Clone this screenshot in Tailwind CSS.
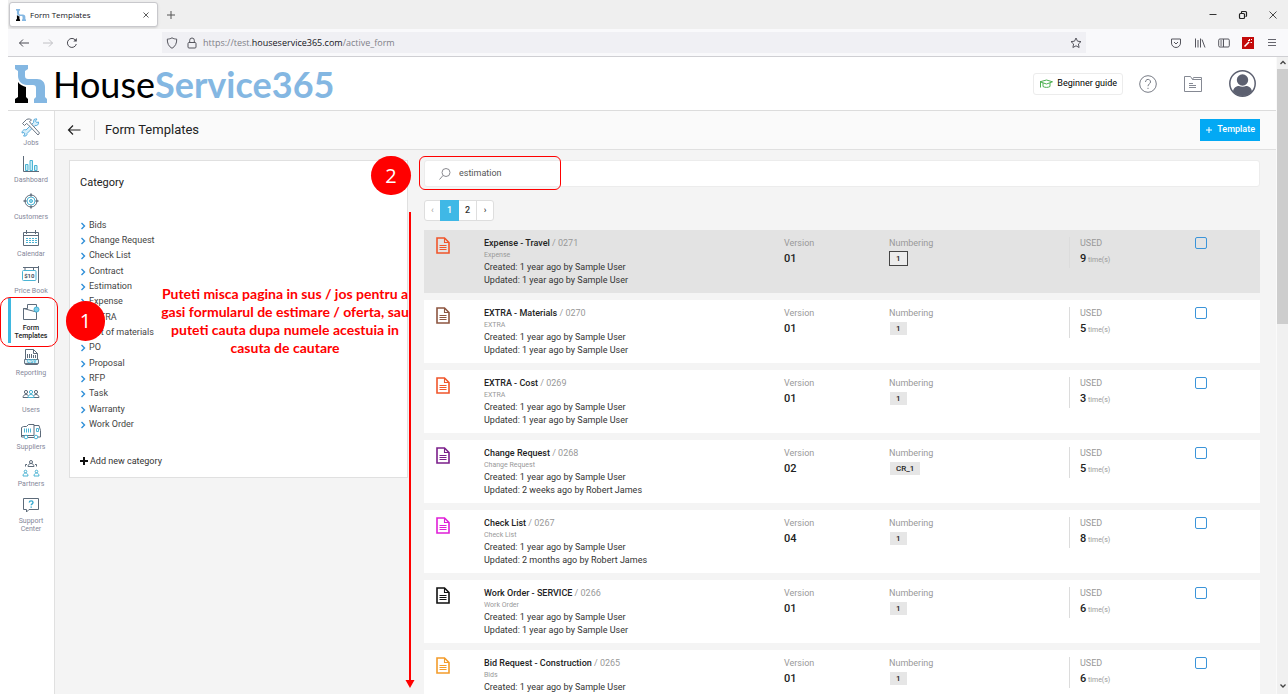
<!DOCTYPE html>
<html lang="en">
<head>
    <meta charset="UTF-8">
    <meta name="viewport" content="width=device-width, initial-scale=1.0">
    <title>Form Templates</title>
    <script src="https://cdn.jsdelivr.net/npm/@tailwindcss/browser@4"></script>
</head>

<body class="relative h-screen overflow-hidden bg-white pl-2 pb-0.5 flex flex-col font-['Roboto',sans-serif] text-[#333]">

    <!-- Tabs -->
    <div class="h-[29px] shrink-0 bg-[#efefef] flex items-center font-['Open_Sans',sans-serif]">
        <div class="ml-px w-[149px] h-[25px] bg-white border border-[#c8c8cc] rounded-[3px] shadow-sm flex items-center pl-1.5 pr-2">
            <svg class="w-2.5 h-3" viewBox="0 0 32 38"><path fill="#84b7e2" d="M0 0h13v4l-3 2v8c0 2 1 3 3 3h9c5 0 8 3 8 8v7l2 2v4H19v-4l2-2v-7c0-2-1-3-3-3h-6c-5 0-9-4-9-9V6L0 4z"/><path fill="#000" d="M3 19c2 3 5 4 8 4v9l2 2v4H0v-4l3-2z"/></svg>
            <span class="ml-1 flex-1 text-[8px] text-[#15141a]">Form Templates</span>
            <button aria-label="Close tab"><svg class="w-1.5 h-1.5" viewBox="0 0 6 6" stroke="#333" stroke-width=".8"><path d="M.5.5l5 5M5.5.5l-5 5"/></svg></button>
        </div>
        <button aria-label="New tab" class="ml-2"><svg class="w-2.5 h-2.5" viewBox="0 0 10 10" stroke="#555" stroke-width="1"><path d="M5 1v8M1 5h8"/></svg></button>
        <div class="ml-auto flex items-center gap-5 pr-2.5">
            <button aria-label="Minimize" class="w-2.5"><svg class="w-2.5 h-2.5" viewBox="0 0 10 10" stroke="#333"><path d="M1.500 4.500h7"/></svg></button>
            <button aria-label="Restore" class="w-2.5"><svg class="w-2.5 h-2.5" viewBox="0 0 10 10" fill="none" stroke="#222" stroke-width="1.200"><rect x="1.500" y="3.500" width="5" height="5" rx="1"/><path d="M3.500 3V2q0-.5.5-.5h3.500q1 0 1 1V6q0 .5-1 .5"/></svg></button>
            <button aria-label="Close" class="w-2.5"><svg class="w-2.5 h-2.5" viewBox="0 0 10 10" stroke="#333" stroke-width=".9"><path d="M1.500 1.500l7 7M8.500 1.500l-7 7"/></svg></button>
        </div>
    </div>

    <!-- Address bar -->
    <div class="h-7 shrink-0 bg-[#f9f9fb] border-b border-[#cfcfd3] flex items-center font-['Open_Sans',sans-serif]">
        <div class="w-[154px] flex items-center gap-3 pl-2.5">
            <button aria-label="Back"><svg class="w-3 h-3" viewBox="0 0 12 12" fill="none" stroke="#4a4a52"><path d="M11 6H1.500M5 2.500L1.500 6 5 9.500"/></svg></button>
            <button aria-label="Forward"><svg class="w-3 h-3" viewBox="0 0 12 12" fill="none" stroke="#c0c0c4"><path d="M1 6h9.500M7 2.500L10.500 6 7 9.500"/></svg></button>
            <button aria-label="Reload"><svg class="w-3 h-3" viewBox="0 0 12 12" fill="none" stroke="#4a4a52"><path d="M10.300 7A4.500 4.500 0 1 1 9.500 3.200"/><path d="M10.800 1v3.500H7.300z" fill="#4a4a52" stroke="none"/></svg></button>
        </div>
        <div class="flex-1 h-[21px] bg-[#f0f0f4] flex items-center pl-1">
            <svg class="w-3 h-3" viewBox="0 0 12 12" fill="none" stroke="#55555d"><path d="M6 .8c1.500 1 3 1.200 4.700 1.300C10.800 6 9.500 9.500 6 11.300 2.500 9.500 1.200 6 1.300 2.100 3 2 4.500 1.800 6 .8z"/></svg>
            <svg class="ml-2 w-3 h-3" viewBox="0 0 12 12" fill="none" stroke="#55555d"><rect x="2" y="5.500" width="8" height="5.500" rx="1"/><path d="M3.700 5.500V3.300a2.300 2.300 0 0 1 4.600 0v2.200"/></svg>
            <span class="ml-1 pl-px flex-1 text-[9px] text-[#808088]">https://test.<span class="text-[#15141a]">houseservice365.com</span>/active_form</span>
            <button aria-label="Bookmark" class="mr-1"><svg class="w-3 h-3" viewBox="0 0 12 12" fill="none" stroke="#55555d" stroke-linejoin="round"><path d="M6 1l1.500 3.200 3.500.4-2.600 2.400.7 3.500L6 8.800l-3.100 1.700.7-3.500L1 4.600l3.500-.4z"/></svg></button>
        </div>
        <div class="w-[202px] flex items-center justify-end gap-3 pr-2.5">
            <button aria-label="Pocket"><svg class="w-3 h-3" viewBox="0 0 12 12" fill="none" stroke="#55555d"><path d="M1.500 2h9v4a4.500 4.500 0 0 1-9 0z"/><path d="M4 5l2 2 2-2"/></svg></button>
            <button aria-label="Library"><svg class="w-3 h-3" viewBox="0 0 12 12" fill="none" stroke="#55555d"><path d="M1.500 1.500v9M4 3v7.500M6.500 1.500v9M8 2.500l3 8"/></svg></button>
            <button aria-label="Sidebars"><svg class="w-3 h-3" viewBox="0 0 12 12" fill="none" stroke="#55555d"><rect x=".7" y="2" width="10.600" height="8" rx="1.200"/><path d="M5.500 2v8M2.200 4h2M2.200 6h2M2.200 8h2"/></svg></button>
            <button aria-label="Extension" class="bg-[#c40b0b]"><svg class="w-3 h-3" viewBox="0 0 12 12" fill="none" stroke="#fff"><path d="M2.500 9.500L7 5" stroke-width="1.600"/><path d="M7.500 2v2M6 3.500h1.500M8.500 5.500h1.500M9 3l1-1"/></svg></button>
            <button aria-label="Menu"><svg class="w-3 h-3" viewBox="0 0 12 12" stroke="#66666e"><path d="M2 2.500h8M2 5.500h8M2 8.500h8"/></svg></button>
        </div>
    </div>

    <div class="flex flex-1 min-h-0">
        <div class="flex-1 min-w-0 flex flex-col">

            <!-- Header -->
            <header class="h-[54px] shrink-0 border-b border-[#dcdcdc] flex items-center pl-2 pr-5">
                <a href="#" class="flex items-center">
                    <svg class="w-8 h-[38px] -ml-px" viewBox="0 0 32 38"><path fill="#84b7e2" d="M0 0h13v4l-3 2v5c0 2 1 3 3 3h9c5 0 8 3 8 8v10l2 2v4H19v-4l2-2V23c0-2-1-3-3-3h-6c-5 0-9-4-9-9V6L0 4z"/><path fill="#000" d="M3 17c2 3 5 4 8 5v10l2 2v4H0v-4l3-2z"/></svg>
                    <span class="ml-1.5 text-[36px] leading-[48px] font-['Lato',sans-serif] text-black">House<span class="font-bold text-[#84b7e2]">Service365</span></span>
                </a>
                <div class="ml-auto flex items-center">
                    <a href="#guide" class="h-[22px] px-[5px] border border-[#ececec] rounded-[3px] flex items-center text-[9px] text-black whitespace-nowrap">
                        <svg class="w-3.5 h-3 mr-1" viewBox="0 0 14 12" fill="none" stroke="#4caf50" stroke-linejoin="round"><path d="M1 3.800L7.500 2l6 1.800-6 2.200zM4 5v3.500c2 1.200 5 1.200 7 0V5M1.500 4v5.500"/></svg>
                        Beginner guide
                    </a>
                    <a href="#help" aria-label="Help" class="ml-4"><svg class="w-[18px] h-[18px]" viewBox="0 0 18 18" fill="none" stroke="#777b85"><circle cx="9" cy="9" r="8.300"/><path d="M6.500 7c0-3.600 5.200-3.300 5 0 0 1.800-2.500 2-2.500 4.200M9 12.800V14"/></svg></a>
                    <a href="#files" aria-label="Files" class="ml-[27px]"><svg class="w-[18px] h-[18px]" viewBox="0 0 18 18" fill="none" stroke="#858993"><path d="M.5 16.500V1.500h6l2 3h9v12zM8.500 4.500l1-2h8v2M5 8.500h4M5 10.500h7M5 12.500h7"/></svg></a>
                    <a href="#profile" aria-label="Profile" class="ml-[27px]"><svg class="w-[27px] h-[27px]" viewBox="0 0 27 27"><circle cx="13.500" cy="13.500" r="12.700" fill="#fff" stroke="#5c6070" stroke-width="1.500"/><circle cx="13.500" cy="10" r="5.700" fill="#5c6070"/><path fill="#5c6070" d="M4 21.500c.5-4 3.500-5.500 6-5.500 2 1 5 1 7 0 2.500 0 5.500 1.500 6 5.500-5 6-14 6-19 0z"/></svg></a>
                </div>
            </header>

            <div class="flex flex-1 min-h-0">
                <!-- Sidebar -->
                <nav class="w-[47px] shrink-0 border-r border-[#e0e0e0] pt-1.5 flex flex-col gap-[7px] text-center text-[7px] leading-2 text-[#85879a]">
                    <a href="#jobs" class="block">
                        <svg class="w-5 h-5 mx-auto mb-0.5" viewBox="0 0 20 20" fill="none" stroke="#6b7684"><path stroke="#5aaede" fill="#d8effa" d="M13 2.500c2-1 3-.5 3-.5l-1.500 2 1 1.500 2-.5c.5 3-2 4-3.500 3.500l-8 8c.5 2-1.500 3-3.500 2.500l1.500-2-1-1.500-2 .5c0-2.500 2-4 4-3l7.500-7.500z"/><path fill="#fff" d="M1.500 6.500l4-4c2-1 4-.5 5 .5L8.500 4.500l1 1.500 9 10-1.500 2L7.500 8l-2-1.500L3.500 8.500z"/></svg>
                        Jobs
                    </a>
                    <a href="#dashboard" class="block">
                        <svg class="w-5 h-5 mx-auto mb-0.5" viewBox="0 0 20 20" fill="#c9ecf6" stroke="#4bb4d4"><path d="M4.500 10.500h2.500v6H4.500zM9 6.500h2.500v10H9zM13.500 11.500H16v5h-2.500z"/><path stroke="#5d6b7a" fill="none" d="M2.500 2v15.500H18"/></svg>
                        Dashboard
                    </a>
                    <a href="#customers" class="block">
                        <svg class="w-5 h-5 mx-auto mb-0.5" viewBox="0 0 20 20" fill="none" stroke="#5d6b7a"><circle cx="10" cy="10" r="6"/><circle cx="10" cy="10" r="4" stroke="#4bb4d4"/><circle cx="10" cy="10" r="1.500" fill="#9bdcee" stroke="#4bb4d4"/><path stroke-width="1.500" d="M10 2.500v3M10 14.500v3M2.500 10h3M14.500 10h3"/></svg>
                        Customers
                    </a>
                    <a href="#calendar" class="block">
                        <svg class="w-5 h-5 mx-auto mb-0.5" viewBox="0 0 20 20" fill="none" stroke="#5d6b7a"><path d="M2.500 4.500h15v13h-15zM2.500 7.500h15M5.500 2v4M14.500 2v4"/><path stroke="#4bb4d4" stroke-dasharray="2 1" d="M5 10.500h11M5 12.500h11M5 14.500h11"/></svg>
                        Calendar
                    </a>
                    <a href="#price-book" class="block">
                        <svg class="w-5 h-5 mx-auto mb-0.5" viewBox="0 0 20 20" fill="none" stroke="#5d6b7a"><path d="M2 2.500h16M17.500 1v17"/><rect x="1.500" y="5.500" width="13.500" height="10" rx="1" stroke="#4bb4d4"/><path d="M4 3v2M12.500 3v2"/><text x="8.300" y="12.800" text-anchor="middle" font-size="6" font-weight="700" fill="#4b5563" stroke="none">$10</text></svg>
                        Price Book
                    </a>
                    <a href="#form-templates" class="relative block text-[#222] font-medium">
                        <span class="absolute left-0 -top-1 w-[3px] h-[45px] bg-[#3fb8e0]"></span>
                        <svg class="w-5 h-5 mx-auto mb-0.5" viewBox="0 0 20 20" fill="none" stroke="#5d6b7a"><path d="M6.500 2.500h9v3M15.500 10v7.500h-13v-11zM6.500 2.500v4h-4"/><circle cx="15.500" cy="7.500" r="2.500" fill="#7fd0ea" stroke="#3fb0d6"/></svg>
                        Form<br>Templates
                    </a>
                    <a href="#reporting" class="block">
                        <svg class="w-5 h-5 mx-auto mb-0.5" viewBox="0 0 20 20" fill="none" stroke="#5d6b7a"><path d="M4.500 2.500h8l4 4v11h-12zM12.500 2.500v4h4M6.500 7v4M8.500 7v4M10.500 7v4M12.500 8v3M14.500 8v3"/><path d="M3.500 12.500h14v4h-14z" fill="#e2f5fb" stroke="#6b7684"/><text x="10.500" y="16.300" text-anchor="middle" font-size="5" font-weight="700" fill="#4bb4d4" stroke="none">CSV</text></svg>
                        Reporting
                    </a>
                    <a href="#users" class="block">
                        <svg class="w-5 h-5 mx-auto mb-0.5" viewBox="0 0 20 20" fill="none" stroke="#5d6b7a"><circle cx="5" cy="8" r="1.600"/><circle cx="15" cy="8" r="1.600"/><path d="M2 13.500c0-4 6-4 6 0zM12 13.500c0-4 6-4 6 0z"/><g stroke="#4bb4d4" fill="#fff"><path d="M7 13.500c0-4 6-4 6 0z"/><circle cx="10" cy="8" r="1.600"/></g></svg>
                        Users
                    </a>
                    <a href="#suppliers" class="block">
                        <svg class="w-[22px] h-5 mx-auto mb-0.5" viewBox="0 0 22 20" fill="none" stroke="#5d6b7a"><path d="M1.500 6.500l2-1h3l2-2h5.500v11H1.500zM14 4.500h5l1.500 5v6.500h-3M1.500 14v2h2.500M8 16.500h6"/><path stroke="#4bb4d4" d="M4.500 7.500v4M6.500 7.500v4M8.500 7.500v4M10.500 7.500v4M16.500 7.500h2v3h-2z"/><circle cx="6" cy="16" r="1.800" stroke="#4bb4d4"/><circle cx="16" cy="16" r="1.800" stroke="#4bb4d4"/></svg>
                        Suppliers
                    </a>
                    <a href="#partners" class="block">
                        <svg class="w-5 h-5 mx-auto mb-0.5" viewBox="0 0 20 20" fill="none" stroke="#5d6b7a"><circle cx="10" cy="4" r="1.500"/><path d="M7 8.500c0-4 6-4 6 0zM4.500 8.500V6.500H6M15.500 8.500V6.500H14"/><g stroke="#4bb4d4"><circle cx="4.500" cy="13.500" r="1.300"/><path d="M2 18c0-4 5-4 5 0z"/><circle cx="15.500" cy="13.500" r="1.300"/><path d="M13 18c0-4 5-4 5 0z"/></g></svg>
                        Partners
                    </a>
                    <a href="#support" class="block">
                        <svg class="w-5 h-5 mx-auto mb-0.5" viewBox="0 0 20 20" fill="none" stroke="#5d6b7a"><path d="M2.500 3.500h15v11H8l-2.500 2.500v-2.500h-3z"/><path stroke="#35a9cf" stroke-width="1.400" d="M8.300 7.500c0-2.200 3.700-2.200 3.700 0 0 1.500-1.800 1.200-1.800 2.800M10.200 11.500v1.200"/></svg>
                        Support<br>Center
                    </a>
                </nav>

                <main class="flex-1 min-w-0 flex flex-col bg-[#f4f4f4]">
                    <!-- Title bar -->
                    <div class="h-[39px] shrink-0 bg-[#fafafa] border-b border-[#e0e0e0] flex items-center pl-3 pr-4">
                        <a href="#back" aria-label="Back"><svg class="w-[14px] h-3" viewBox="0 0 14 12" fill="none" stroke="#222" stroke-width="1.200"><path d="M13.500 6H1.500M6 1.500L1.500 6 6 10.500"/></svg></a>
                        <h1 class="ml-[13px] h-5 border-l border-[#dcdcdc] pl-2.5 text-[13px] leading-5 text-[#222]">Form Templates</h1>
                        <button class="ml-auto h-[22px] px-[5px] bg-[#03a9f4] text-white text-[9px] font-medium flex items-center gap-1">
                            <svg class="w-2 h-2" viewBox="0 0 8 8" stroke="#fff"><path d="M4 1v6M1 4h6"/></svg>
                            Template
                        </button>
                    </div>

                    <div class="flex-1 min-h-0 overflow-hidden flex items-start gap-4 pl-3.5 pr-4 pt-2.5">
                        <!-- Categories -->
                        <section class="w-[339px] shrink-0 bg-white border border-[#e0e0e0] pl-2.5 pt-3.5 pb-2">
                            <h2 class="text-[11px] leading-4 text-[#222]">Category</h2>
                            <ul id="categories" class="mt-[27px] text-[9px] leading-[15px] text-[#444]"></ul>
                            <button class="mt-[21px] flex items-center gap-0.5 text-[9px] leading-4 text-[#333]">
                                <svg class="w-2 h-2" viewBox="0 0 8 8" stroke="#111" stroke-width="2"><path d="M4 0v8M0 4h8"/></svg>
                                Add new category
                            </button>
                        </section>

                        <!-- Templates -->
                        <section class="flex-1 min-w-0">
                            <label class="h-[27px] bg-white border border-[#ececec] rounded-[3px] flex items-center pl-[13px]">
                                <svg class="w-3.5 h-3.5" viewBox="0 0 14 14" fill="none" stroke="#8a8a90"><circle cx="8" cy="5.500" r="4"/><path d="M5 8.500L1.500 12.500"/></svg>
                                <input type="text" value="estimation" aria-label="Search" class="ml-[7px] flex-1 text-[9px] text-[#555] outline-none">
                            </label>

                            <div class="mt-[13px] w-[70px] h-[21px] bg-white border border-[#dedede] rounded-[3px] flex text-[9px] font-medium">
                                <button class="w-[15px] text-[#aaa]">‹</button>
                                <button class="w-[19px] -my-px bg-[#3fb8e6] text-white">1</button>
                                <button class="w-[18px] border-r border-[#dedede]">2</button>
                                <button class="flex-1">›</button>
                            </div>

                            <ul id="templates" class="mt-[9px] flex flex-col gap-[7px]"></ul>
                        </section>
                    </div>
                </main>
            </div>
        </div>

        <!-- Scrollbar -->
        <div class="w-3 shrink-0 bg-[#f0f0f0] border-l border-[#fafafa] flex flex-col items-center">
            <svg class="w-2.5 h-3" viewBox="0 0 10 12" fill="none" stroke="#444" stroke-width="1.300"><path d="M2.500 7L5 4.500 7.500 7"/></svg>
            <div class="w-full h-[40%] bg-[#cdcdcd]"></div>
            <svg class="w-2.5 h-3 mt-auto" viewBox="0 0 10 12" fill="none" stroke="#444" stroke-width="1.300"><path d="M2.500 2.500L5 5l2.500-2.500"/></svg>
        </div>
    </div>

    <!-- Step markers drawn over the page -->
    <div class="pointer-events-none text-white text-[20px] font-['Open_Sans',sans-serif]">
        <div class="absolute left-0 top-[297px] w-[58px] h-[50px] border border-[#f00] rounded-[10px]"></div>
        <div class="absolute left-[66px] top-[301px] w-[39px] h-10 rounded-full bg-[#f00] flex items-center justify-center">1</div>
        <div class="absolute left-[419px] top-[156px] w-[142px] h-[34px] border border-[#f00] rounded-[6px]"></div>
        <div class="absolute left-[371px] top-[156px] w-10 h-[39px] rounded-full bg-[#f00] flex items-center justify-center">2</div>
        <svg class="absolute left-[405px] top-[212px] w-2.5 h-[476px]" viewBox="0 0 10 476" fill="#f00"><path d="M4 0h2v468h3.500L5 476 .5 468H4z"/></svg>
        <p class="absolute left-[156px] top-[285px] w-[258px] text-center text-[14px] leading-[18px] font-bold text-[#f00] font-['Lato',sans-serif] whitespace-nowrap">Puteti misca pagina in sus / jos pentru a<br>gasi formularul de estimare / oferta, sau<br>puteti cauta dupa numele acestuia in<br>casuta de cautare</p>
    </div>

    <script>
        const categories = ['Bids', 'Change Request', 'Check List', 'Contract', 'Estimation', 'Expense', 'EXTRA',
            'List of materials', 'PO', 'Proposal', 'RFP', 'Task', 'Warranty', 'Work Order'];

        const templates = [
            { name: 'Expense - Travel', id: '0271', category: 'Expense', updated: '1 year ago by Sample User', version: '01', numbering: '1', used: 9, color: '#f0562b', active: true },
            { name: 'EXTRA - Materials', id: '0270', category: 'EXTRA', updated: '1 year ago by Sample User', version: '01', numbering: '1', used: 5, color: '#8d5540' },
            { name: 'EXTRA - Cost', id: '0269', category: 'EXTRA', updated: '1 year ago by Sample User', version: '01', numbering: '1', used: 3, color: '#f0562b' },
            { name: 'Change Request', id: '0268', category: 'Change Request', updated: '2 weeks ago by Robert James', version: '02', numbering: 'CR_1', used: 5, color: '#7b1f8a' },
            { name: 'Check List', id: '0267', category: 'Check List', updated: '2 months ago by Robert James', version: '04', numbering: '1', used: 8, color: '#e01fd8' },
            { name: 'Work Order - SERVICE', id: '0266', category: 'Work Order', updated: '1 year ago by Sample User', version: '01', numbering: '1', used: 6, color: '#111111' },
            { name: 'Bid Request - Construction', id: '0265', category: 'Bids', updated: '', version: '01', numbering: '1', used: 6, color: '#f39c2b' }
        ];

        document.getElementById('categories').innerHTML = categories.map(name =>
            `<li class="h-[15px] nth-[3n]:mb-px">
                <a href="#" class="flex items-center gap-[3px]">
                    <svg class="w-1.5 h-2" viewBox="0 0 6 8" fill="none" stroke="#2f8fd8" stroke-width="1.400"><path d="M1.500 1L4.500 4l-3 3"/></svg>
                    ${name}
                </a>
            </li>`
        ).join('');

        document.getElementById('templates').innerHTML = templates.map(t =>
            `<li class="h-[63px] pt-[7px] grid grid-cols-[60px_300fr_105fr_180fr_126fr_65fr] items-start text-[9px] leading-[13px] ${t.active ? 'bg-[#e3e3e3]' : 'bg-white'}">
                <svg class="ml-3 w-[14px] h-[17px]" viewBox="0 0 14 17" fill="none" stroke="${t.color}" stroke-width="1.600"><path d="M1 1h7.500L13 5.500V16H1z"/><path d="M8.500 1v4.500H13M3.500 8.500h7M3.500 10.500h7M3.500 12.500h7" stroke-width="1.100"/></svg>
                <div>
                    <div class="text-[#999]"><b class="font-medium text-[#222]">${t.name}</b> / ${t.id}</div>
                    <div class="text-[7px] leading-[11px] text-[#999]">${t.category}</div>
                    <div>Created: 1 year ago by Sample User</div>
                    ${t.updated ? `<div>Updated: ${t.updated}</div>` : ''}
                </div>
                <div>
                    <div class="text-[#999]">Version</div>
                    <div class="mt-px text-[11px] leading-4 font-medium text-[#222]">${t.version}</div>
                </div>
                <div>
                    <div class="text-[#999]">Numbering</div>
                    <span class="block mt-px w-fit px-1.5 text-[8px] font-medium text-[#222] ${t.active ? 'border border-[#444] bg-[#ececec]' : 'border border-transparent bg-[#e6e6e6] bg-clip-padding'}">${t.numbering}</span>
                </div>
                <div class="border-l border-[#dcdcdc] pl-2.5">
                    <div class="text-[#999]">USED</div>
                    <div class="mt-px text-[7px] leading-4 text-[#999]"><b class="text-[11px] font-medium text-[#222]">${t.used}</b> time(s)</div>
                </div>
                <input type="checkbox" aria-label="Select ${t.name}" class="appearance-none w-3 h-3 border border-[#3b94d9] rounded-[2px]">
            </li>`
        ).join('');
    </script>
</body>
</html>
